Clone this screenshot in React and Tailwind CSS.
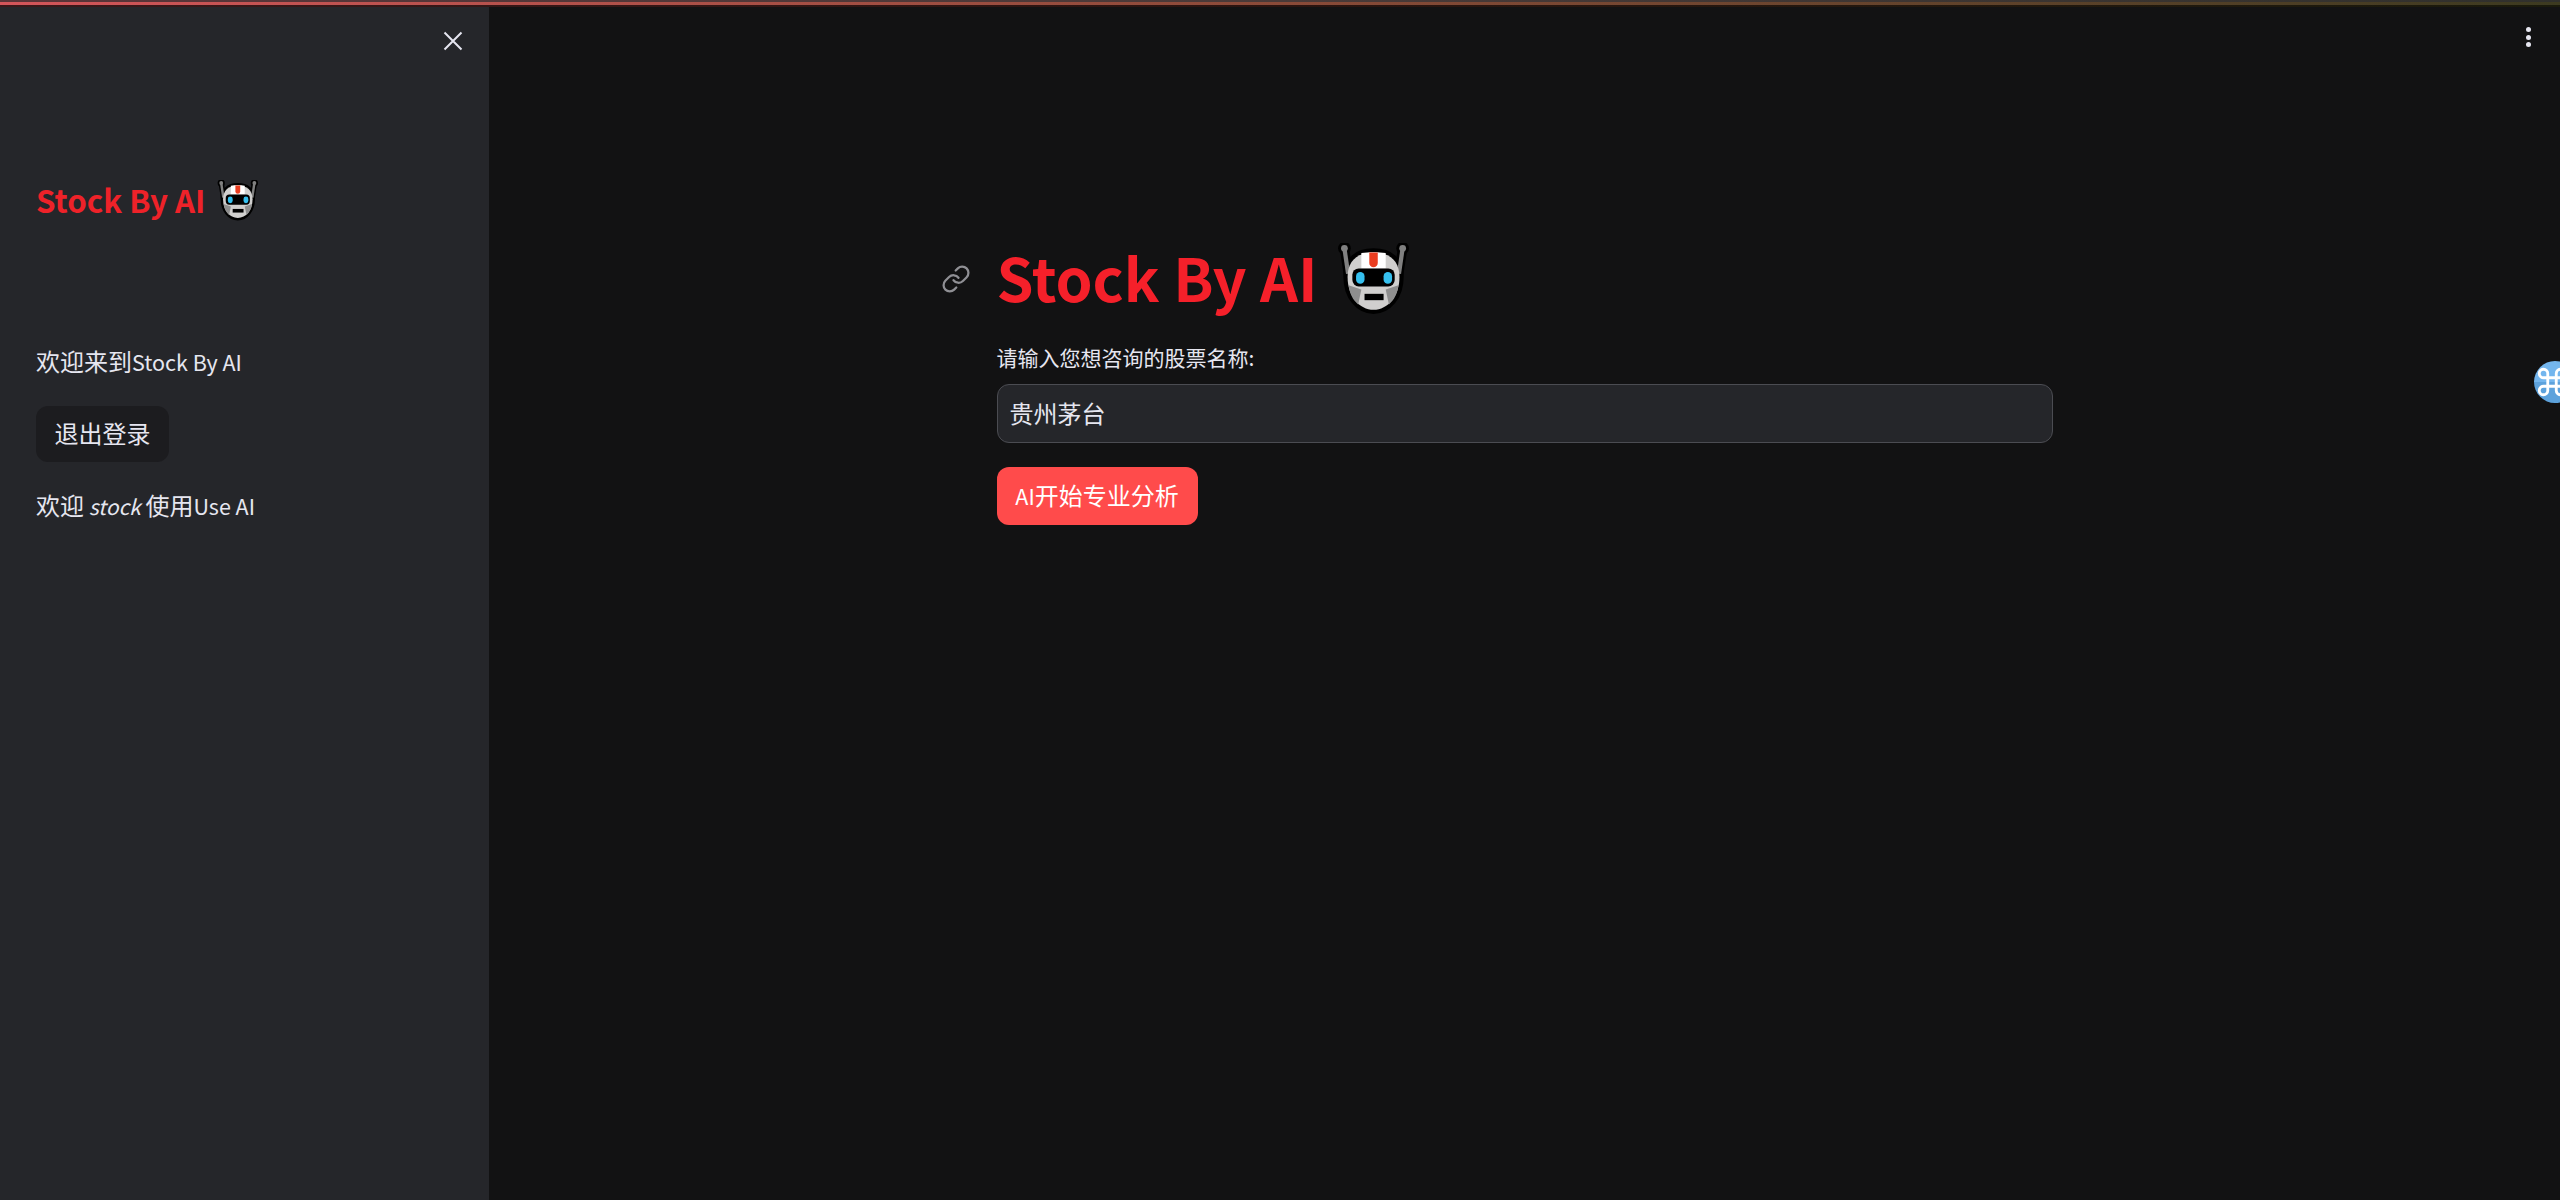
import { Command } from 'lucide-react';

const font = { fontFamily: '"Noto Sans CJK SC", "Noto Sans", sans-serif' };

const headPath = 'M20 42c0-15 9-23 24.500-23S69 27 69 42c0 18-11 31-24.500 31S20 60 20 42z';

function Robot({ className }) {
  return (
    <svg viewBox="10 10 68 68" className={className}>
      {/* outline */}
      <path d={headPath} fill="#000" stroke="#000" strokeWidth="8" />
      <path d="M17 15l4 26M72 15l-4 26" stroke="#000" strokeWidth="9" strokeLinecap="round" />
      <circle cx="17" cy="15" r="6" fill="#000" />
      <circle cx="72" cy="15" r="6" fill="#000" />
      {/* antennas */}
      <path d="M17 15l3.500 24" stroke="#808080" strokeWidth="4" />
      <path d="M72 15l-3.500 24" stroke="#808080" strokeWidth="4" />
      <circle cx="17" cy="15" r="3.200" fill="#808080" />
      <circle cx="72" cy="15" r="3.200" fill="#808080" />
      {/* head */}
      <path d={headPath} fill="#d0cfce" />
      <path d="M21 50c1 8 4 14 9 18l3-14-12-4zM68 50c-1 8-4 14-9 18l-3-14 12-4z" fill="#8e8e8e" />
      <path d="M33 19.500c7-1 16-1 23 0V34H33z" fill="#fff" />
      <path d="M40.500 19h8v10a4 4 0 0 1-8 0z" fill="#ea3c1f" />
      {/* visor */}
      <rect x="24.500" y="34" width="40" height="17" rx="6" fill="#000" />
      <rect x="28" y="37.500" width="8" height="11" rx="4" fill="#35c0ef" />
      <rect x="54" y="37.500" width="8" height="11" rx="4" fill="#35c0ef" />
      <rect x="36" y="58" width="18" height="6" fill="#000" />
    </svg>
  );
}

function CloseIcon() {
  return (
    <svg viewBox="0 0 24 24" className="w-[24px] h-[24px]" fill="none" stroke="#e6e6f0" strokeWidth="2">
      <path d="M3.500 3.500l17 17M20.500 3.500l-17 17" />
    </svg>
  );
}

function LinkIcon() {
  return (
    <svg viewBox="0 0 24 24" className="w-[30px] h-[30px]" fill="none" stroke="#8f8f94" strokeWidth="1.800" strokeLinecap="round" strokeLinejoin="round">
      <path d="M10 13a5 5 0 0 0 7.540.540l3-3a5 5 0 0 0-7.070-7.070l-1.720 1.710" />
      <path d="M14 11a5 5 0 0 0-7.540-.540l-3 3a5 5 0 0 0 7.070 7.070l1.710-1.710" />
    </svg>
  );
}

// latin runs are set smaller, the CJK font's latin is wider than the original's
function Latin({ children }) {
  return <span className="text-[21.500px]">{children}</span>;
}

function Sidebar() {
  return (
    <aside className="w-[489px] shrink-0 h-full bg-[#25262a] text-[#e6e6f0] px-[36px]">
      <div className="flex justify-end pt-[29px] -mr-[12px]">
        <CloseIcon />
      </div>
      <div className="flex items-center mt-[117px] h-[60px] gap-[12px]">
        <h2 className="text-[31.300px] leading-[60px] font-semibold text-[#ee2229]">Stock By AI</h2>
        <Robot className="w-[41px] h-[41px]" />
      </div>
      <p className="text-[24px] leading-[36px] mt-[113px]">欢迎来到<Latin>Stock By AI</Latin></p>
      <button className="block mt-[26px] pb-[2px] h-[56px] w-[133px] rounded-[12px] bg-[#1c1c1f] text-[24px]">退出登录</button>
      <p className="text-[24px] leading-[36px] mt-[25px]">
        欢迎<em className="italic text-[21px]"> stock </em>使用<Latin>Use AI</Latin>
      </p>
    </aside>
  );
}

function MainPanel() {
  return (
    <main className="relative flex-1 h-full flex justify-center bg-[#121213] text-[#e6e6f0]">
      <div className="absolute top-[27px] right-[29px] flex flex-col gap-[2.500px]">
        <span className="w-[5px] h-[5px] rounded-full bg-[#e6e6f0]" />
        <span className="w-[5px] h-[5px] rounded-full bg-[#e6e6f0]" />
        <span className="w-[5px] h-[5px] rounded-full bg-[#e6e6f0]" />
      </div>
      <div className="absolute top-[361px] -right-[16px] w-[42px] h-[42px] rounded-full bg-[linear-gradient(#74b6ee_50%,#5da2dc_50%)] flex items-center justify-start">
        <Command size={34} color="#fff" strokeWidth={2} className="ml-[1px] shrink-0" />
      </div>
      <div className="w-[1056px] pt-[232px]">
        <div className="relative flex items-center h-[90px]">
          <span className="absolute -left-[56px] top-[32px]"><LinkIcon /></span>
          <h1 className="text-[59.300px] leading-[90px] -mt-[2px] font-bold text-[#f5202a]">Stock By AI</h1>
          <Robot className="w-[72px] h-[72px] ml-[20px] mt-[3px]" />
        </div>
        <label className="block text-[21px] leading-[30px] mt-[20px]">请输入您想咨询的股票名称:</label>
        <div className="mt-[12px] pb-[2px] h-[59px] rounded-[12px] border border-[#4b4c52] bg-[#25262a] flex items-center px-[12px] text-[24px]">
          贵州茅台
        </div>
        <button className="block mt-[24px] pb-[3px] h-[58px] w-[201px] rounded-[12px] bg-[#ff4b4b] text-white text-[24px]"><Latin>AI</Latin>开始专业分析</button>
      </div>
    </main>
  );
}

function TopBar() {
  return (
    <div className="absolute z-10 top-0 left-0 w-full flex flex-col">
      <div className="h-[2px] bg-gradient-to-r from-[#5a3438] via-[#4a3a38] to-[#30302c]" />
      <div className="h-[3px] bg-gradient-to-r from-[#d4555a] via-[#8a4a38] to-[#3c3a20]" />
      <div className="h-[2px] bg-gradient-to-r from-[#3a181a] via-[#2a1410] to-[#1a1a0c]" />
    </div>
  );
}

export default function App() {
  return (
    <div className="relative flex h-[1200px] w-[2560px] overflow-hidden" style={font}>
      <TopBar />
      <Sidebar />
      <MainPanel />
    </div>
  );
}
